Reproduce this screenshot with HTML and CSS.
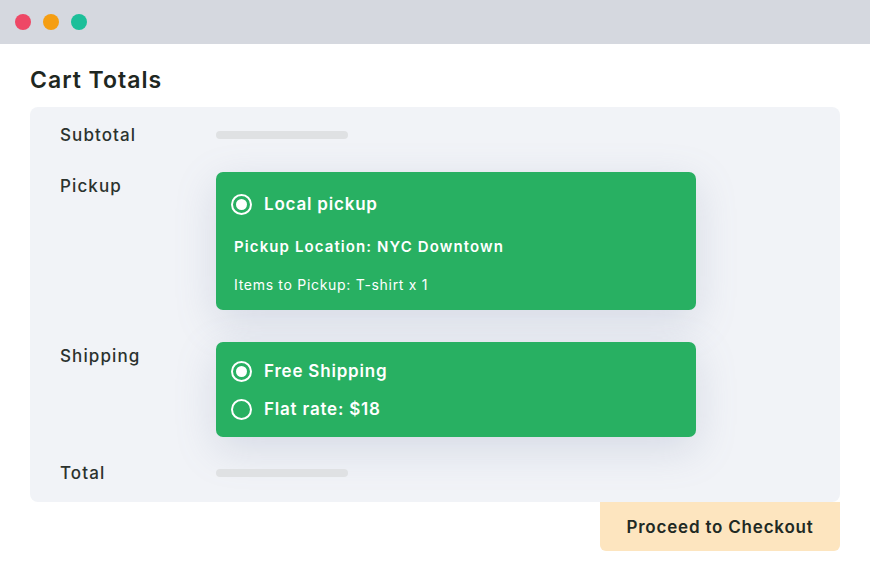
FILE: index.html
```html
<!DOCTYPE html>
<html>
<head>
<meta charset="utf-8">
<link rel="stylesheet" href="styles.css">
</head>
<body>
<div class="window">
  <div class="titlebar">
    <span class="dot dot-red"></span>
    <span class="dot dot-orange"></span>
    <span class="dot dot-green"></span>
  </div>
  <div class="content">
    <h1 class="title">Cart Totals</h1>
    <div class="card">
      <div class="row row-subtotal">
        <div class="label">Subtotal</div>
        <div class="bar"></div>
      </div>
      <div class="row row-pickup">
        <div class="label">Pickup</div>
        <div class="option-box pickup-box">
          <div class="option">
            <span class="radio checked"></span>
            <span class="option-text">Local pickup</span>
          </div>
          <div class="pickup-location">Pickup Location: NYC Downtown</div>
          <div class="pickup-items">Items to Pickup: T-shirt x 1</div>
        </div>
      </div>
      <div class="row row-shipping">
        <div class="label">Shipping</div>
        <div class="option-box shipping-box">
          <div class="option">
            <span class="radio checked"></span>
            <span class="option-text">Free Shipping</span>
          </div>
          <div class="option">
            <span class="radio"></span>
            <span class="option-text">Flat rate: $18</span>
          </div>
        </div>
      </div>
      <div class="row row-total">
        <div class="label">Total</div>
        <div class="bar"></div>
      </div>
    </div>
    <div class="actions">
      <button class="checkout">Proceed to Checkout</button>
    </div>
  </div>
</div>
</body>
</html>
```
FILE: styles.css
```css
* { box-sizing: border-box; }
html, body { margin: 0; padding: 0; background: #ffffff; }
body {
  font-family: "Inter", "Open Sans", sans-serif;
  color: #2b322e;
  width: 870px;
  height: 570px;
  overflow: hidden;
}
.titlebar {
  height: 44px;
  background: #d5d8df;
  display: flex;
  align-items: center;
  gap: 12px;
  padding-left: 15px;
}
.dot {
  width: 16px;
  height: 16px;
  border-radius: 50%;
  display: block;
}
.dot-red { background: #ee4866; }
.dot-orange { background: #f59e12; }
.dot-green { background: #1cbf99; }

.content {
  padding: 0 30px 0 30px;
}
.title {
  margin: 0;
  padding-top: 22px;
  height: 63px;
  font-size: 23px;
  line-height: 28px;
  font-weight: 600;
  color: #1e2721;
  letter-spacing: 1px;
}
.card {
  background: #f1f3f7;
  border-radius: 8px;
  padding: 16px 0 17px 30px;
  display: flex;
  flex-direction: column;
}
.row {
  display: grid;
  grid-template-columns: 156px 1fr;
  align-items: start;
}
.label {
  font-size: 17px;
  line-height: 24px;
  font-weight: 500;
  color: #2b322e;
  letter-spacing: 1.1px;
}
.row-subtotal, .row-total { align-items: center; }
.row-pickup { margin-top: 25px; }
.row-shipping { margin-top: 32px; }
.row-total { margin-top: 24px; }
.row-pickup .label, .row-shipping .label { padding-top: 2px; }
.bar {
  width: 132px;
  height: 8px;
  border-radius: 4px;
  background: #dfe1e3;
}
.option-box {
  width: 480px;
  background: #28b062;
  border-radius: 7px;
  color: #ffffff;
  box-shadow: 0 12px 40px rgba(120, 132, 170, 0.22);
}
.pickup-box {
  height: 138px;
  padding: 20px 18px 0 15px;
}
.shipping-box {
  height: 95px;
  padding: 17px 18px 0 15px;
  display: flex;
  flex-direction: column;
  gap: 14px;
}
.option {
  display: flex;
  align-items: center;
  height: 24px;
}
.radio {
  width: 21px;
  height: 21px;
  border-radius: 50%;
  border: 2px solid #ffffff;
  display: flex;
  align-items: center;
  justify-content: center;
  margin-right: 12px;
  flex: none;
}
.radio.checked::after {
  content: "";
  width: 11px;
  height: 11px;
  border-radius: 50%;
  background: #ffffff;
}
.option-text {
  font-size: 17px;
  line-height: 24px;
  font-weight: 600;
  letter-spacing: 0.8px;
}
.pickup-location {
  margin-top: 21px;
  padding-left: 3px;
  font-size: 15px;
  line-height: 20px;
  font-weight: 600;
  letter-spacing: 1.1px;
}
.pickup-items {
  margin-top: 18px;
  padding-left: 3px;
  font-size: 14px;
  line-height: 20px;
  font-weight: 400;
  letter-spacing: 0.7px;
}
.actions {
  display: flex;
  justify-content: flex-end;
}
.checkout {
  width: 240px;
  height: 49px;
  margin-right: 0;
  border: none;
  background: #fde5bf;
  border-radius: 0 0 6px 6px;
  font-family: inherit;
  font-size: 17px;
  font-weight: 600;
  letter-spacing: 0.8px;
  color: #1f2a24;
  padding: 0;
}
```
